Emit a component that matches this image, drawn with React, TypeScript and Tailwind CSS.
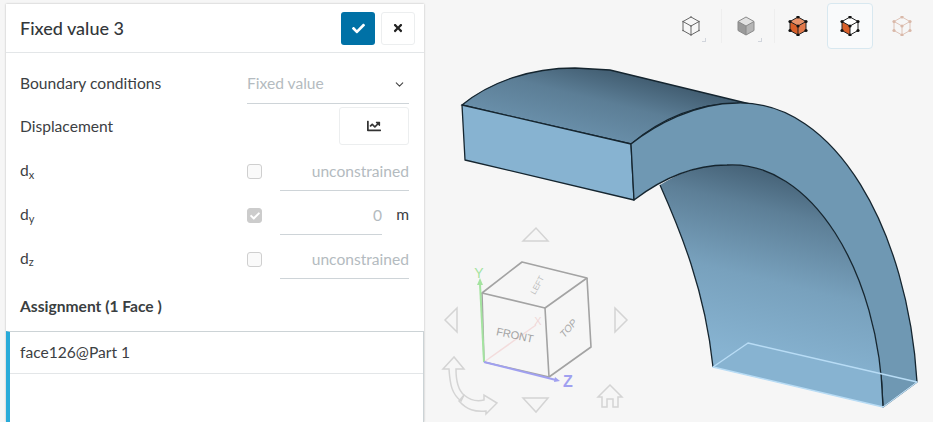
import { ChevronDown } from 'lucide-react';
import { FaCheck, FaChartLine, FaTimes } from 'react-icons/fa';

const outerArc = 'C655,125 695,103 737,103 C835,100 908,230 917,382';
const innerArcBack = 'C880,270 810,160 727,165 C690,165 660,180 634,200';

const Model = () => (
    <svg viewBox="424 0 509 422" className="absolute inset-0 w-full h-full">
        <defs>
            <linearGradient id="topFace" x1="0.1" y1="0.9" x2="0.85" y2="0.1">
                <stop offset="0" stopColor="#7199b5" />
                <stop offset="0.55" stopColor="#5c7e96" />
                <stop offset="1" stopColor="#344c5e" />
            </linearGradient>
            <linearGradient id="underFace" x1="0.6" y1="0" x2="0.42" y2="0.8">
                <stop offset="0" stopColor="#3f5a6e" />
                <stop offset="0.25" stopColor="#5d7f97" />
                <stop offset="0.6" stopColor="#78a1bd" />
                <stop offset="1" stopColor="#87b3d1" />
            </linearGradient>
        </defs>
        <path d="M462,105 C490,82 530,68 575,68 L610,70 L750,104 C700,100 660,120 631,144 Z" fill="url(#topFace)" stroke="#15252f" strokeWidth="1.3" />
        <path d="M660,185 C680,230 705,290 713,367 L883,407 C880,270 810,160 727,165 C700,165 680,172 660,185 Z" fill="url(#underFace)" />
        <path d="M631,144 L634,200 L465,160 L462,105 Z" fill="#87b3d1" stroke="#15252f" strokeWidth="1.3" strokeLinejoin="round" />
        <path d={`M631,144 ${outerArc} L883,407 ${innerArcBack} Z`} fill="#6f98b3" stroke="#15252f" strokeWidth="1.3" strokeLinejoin="round" />
        <path d="M660,185 C680,230 705,290 713,367" fill="none" stroke="#15252f" strokeWidth="1.3" />
        <path d="M713,367 L883,407 L881,373 L748,343 Z" fill="#87b3d1" />
        <path d="M881,373 L883,407" stroke="#15252f" strokeWidth="1.3" />
        <path d="M713,367 L883,407 L917,382 L748,343 Z" fill="none" stroke="#b8dcf5" strokeWidth="1.5" strokeLinejoin="round" />
    </svg>
);

const Gizmo = () => (
    <svg viewBox="424 0 509 422" className="absolute inset-0 w-full h-full" fontFamily="'Liberation Sans', sans-serif">
        <g fill="none" stroke="#d4d4d4" strokeWidth="1.5">
            <path d="M523,241 L536,228 L548,241 Z" />
            <path d="M457,308 L445,320 L457,332 Z" />
            <path d="M615,308 L627,320 L615,332 Z" />
            <path d="M523,398 L536,412 L548,398 Z" />
            <path d="M610,385 L598,397 L602,397 L602,407 L607,407 L607,399 L613,399 L613,407 L618,407 L618,397 L622,397 Z" />
            <path d="M454,357 L443,369 L449,369 C450,385 452,394 461,401 L464,395 C458,390 456,380 456,369 L464,369 Z" />
            <path d="M459,401 C467,410 475,412 486,411 L486,414 L497,403 L484,395 L484,400 C476,402 470,400 464,395 Z" />
        </g>
        <path d="M484,362 L536,325" stroke="#f3dcdc" strokeWidth="1.5" />
        <text x="538" y="325" fontSize="11" fill="#f0d6d6" textAnchor="middle">X</text>
        <g fill="none" stroke="#a3a3a3" strokeWidth="1.6" strokeLinejoin="round">
            <path d="M482,293 L522,262 L587,278 L545,308 Z" />
            <path d="M545,308 L549,377 L591,347 L587,278" />
            <path d="M482,293 L484,362" />
            <path d="M549,377 L484,362" />
        </g>
        <text x="515" y="339" fontSize="11" fill="#a3a3a3" textAnchor="middle" transform="rotate(12 515 335)">FRONT</text>
        <text x="537" y="288" fontSize="8" fill="#bcbcbc" textAnchor="middle" transform="rotate(-62 537 285)">LEFT</text>
        <text x="568" y="332" fontSize="10" fontStyle="italic" fill="#a8a8a8" textAnchor="middle" transform="rotate(-48 568 328)">TOP</text>
        <path d="M484,362 L480,284" stroke="#a4e3a0" strokeWidth="2" />
        <path d="M477,285 L480,278 L483,285 Z" fill="#a4e3a0" />
        <text x="479" y="278" fontSize="14" fill="#a4e3a0" textAnchor="middle">Y</text>
        <path d="M484,362 L556,380" stroke="#a0a0f0" strokeWidth="2" />
        <path d="M555,377 L560,381 L554,382 Z" fill="#a0a0f0" />
        <text x="568" y="387" fontSize="16" fontWeight="bold" fill="#a0a0f0" textAnchor="middle">Z</text>
    </svg>
);

const CubeIcon = ({ mode }: { mode: 'wire' | 'grey' | 'solid' | 'edges' | 'points' }) => {
    const dots = [[10, 1], [18, 5.5], [18, 14.5], [10, 19], [2, 14.5], [2, 5.5], [10, 10]];
    const stroke = mode === 'points' ? '#d9b8a8' : mode === 'wire' ? '#666' : mode === 'grey' ? '#8a8a8a' : '#222';
    return (
        <svg viewBox="0 0 20 20" className="w-5 h-5">
            {mode === 'grey' && (
                <>
                    <path d="M10,1 L18,5.5 L10,10 L2,5.5 Z" fill="#e2e2e2" />
                    <path d="M2,5.5 L10,10 L10,19 L2,14.5 Z" fill="#9a9a9a" />
                    <path d="M18,5.5 L10,10 L10,19 L18,14.5 Z" fill="#b5b5b5" />
                </>
            )}
            {mode === 'solid' && (
                <>
                    <path d="M10,1 L18,5.5 L10,10 L2,5.5 Z" fill="#e8926a" />
                    <path d="M2,5.5 L10,10 L10,19 L2,14.5 Z" fill="#d9602a" />
                    <path d="M18,5.5 L10,10 L10,19 L18,14.5 Z" fill="#e2784a" />
                </>
            )}
            {mode === 'edges' && (
                <>
                    <path d="M10,1 L18,5.5 L10,10 L2,5.5 Z" fill="#fff" />
                    <path d="M2,5.5 L10,10 L10,19 L2,14.5 Z" fill="#d9602a" />
                    <path d="M18,5.5 L10,10 L10,19 L18,14.5 Z" fill="#fff" />
                </>
            )}
            <path d="M10,1 L18,5.5 L18,14.5 L10,19 L2,14.5 L2,5.5 Z M2,5.5 L10,10 L18,5.5 M10,10 L10,19" fill="none" stroke={stroke} strokeWidth={mode === 'points' ? 0.8 : 1} />
            {mode !== 'grey' &&
                dots.map(([x, y]) => (
                    <circle key={`${x}-${y}`} cx={x} cy={y} r={mode === 'wire' ? 0.8 : 1.6} fill={mode === 'points' ? '#d9b8a8' : mode === 'wire' ? '#666' : '#111'} />
                ))}
        </svg>
    );
};

const Toolbar = () => (
    <div className="absolute top-[3px] right-[8px] flex items-center">
        <div className="relative w-[46px] h-[46px] flex items-center justify-center mr-[7px]">
            <CubeIcon mode="wire" />
            <span className="absolute right-[8px] bottom-[7px] w-[4px] h-[4px] border-r border-b border-gray-300" />
        </div>
        <div className="w-px h-[34px] bg-[#eeeeee]" />
        <div className="relative w-[46px] h-[46px] flex items-center justify-center ml-[1px] mr-[5px]">
            <CubeIcon mode="grey" />
            <span className="absolute right-[7px] bottom-[7px] w-[4px] h-[4px] border-r border-b border-gray-300" />
        </div>
        <div className="w-px h-[34px] bg-[#eeeeee]" />
        <div className="w-[46px] h-[46px] flex items-center justify-center mr-[6px]">
            <CubeIcon mode="solid" />
        </div>
        <div className="w-[46px] h-[46px] flex items-center justify-center bg-[#f9fafb] border border-[#d8e8f0] rounded-[4px] mr-[6px]">
            <CubeIcon mode="edges" />
        </div>
        <div className="w-[46px] h-[46px] flex items-center justify-center">
            <CubeIcon mode="points" />
        </div>
    </div>
);

const vectorRows = [
    { axis: 'x', value: 'unconstrained', checked: false },
    { axis: 'y', value: '0', checked: true },
    { axis: 'z', value: 'unconstrained', checked: false },
];

const Panel = () => (
    <div className="w-[418px] h-[418px] mt-[4px] ml-[6px] bg-white shadow-[0_0_2px_rgba(0,0,0,0.25)] flex flex-col shrink-0 text-[15.6px] text-[#3c4043]">
        <div className="h-[49px] pl-[14px] pr-[9px] flex items-center justify-between border-b border-[#e3e6e8]">
            <h1 className="text-[18px] font-medium text-[#33373a]">Fixed value 3</h1>
            <div className="flex gap-[6px]">
                <button className="w-[34px] h-[33px] bg-[#0071a6] rounded-[3px] flex items-center justify-center text-white text-[13px]">
                    <FaCheck />
                </button>
                <button className="w-[34px] h-[33px] bg-white border border-[#eceeef] rounded-[3px] flex items-center justify-center text-[#222] text-[12px]">
                    <FaTimes />
                </button>
            </div>
        </div>
        <div className="pl-[14px] pr-[15px]">
            <div className="h-[51px] flex items-end justify-between">
                <span className="pb-[9px]">Boundary conditions</span>
                <div className="w-[162px] h-[40px] flex items-center justify-between border-b border-[#ced4d8] text-[#b4bbc0] pt-[1px]">
                    <span>Fixed value</span>
                    <ChevronDown size={13} className="text-[#444] mr-[3px]" />
                </div>
            </div>
            <div className="h-[43px] flex items-center justify-between">
                <span className="mt-[3px]">Displacement</span>
                <button className="w-[70px] h-[38px] mt-[1px] border border-[#eceeef] rounded-[3px] flex items-center justify-center text-[#333] text-[14px]">
                    <FaChartLine />
                </button>
            </div>
            {vectorRows.map(({ axis, value, checked }) => (
                <div key={axis} className="h-[43.7px] flex items-center justify-between">
                    <span className="mt-[4px]">
                        d<sub className="text-[11px]">{axis}</sub>
                    </span>
                    <div className="w-[162px] flex items-center">
                        <span className={`w-[15px] h-[15px] mt-[6px] rounded-[3px] border flex items-center justify-center text-white text-[10px] ${checked ? 'bg-[#cccccc] border-[#cccccc]' : 'bg-[#fafafa] border-[#cfcfcf]'}`}>
                            {checked && <FaCheck />}
                        </span>
                        <div className="ml-[18px] flex-1 flex items-center">
                            <div className="flex-1 h-[38px] flex items-center justify-end border-b border-[#ced4d8] text-[#b4bbc0] mt-[7px]">
                                {value}
                            </div>
                            {checked && <span className="w-[27px] mt-[5px] text-right text-[#3c4043]">m</span>}
                        </div>
                    </div>
                </div>
            ))}
        </div>
        <div className="pl-[14px] pt-[4px] h-[53px] font-bold text-[#3a3e41] flex items-center">Assignment (1 Face )</div>
        <div className="flex-1 border-t border-r border-[#ccd3d6] border-l-[4px] border-l-[#29abd9]">
            <div className="h-[42px] pl-[10px] flex items-center border-b border-[#e3e6e8]">face126@Part 1</div>
        </div>
    </div>
);

export default function App() {
    return (
        <div className="w-[933px] h-[422px] overflow-hidden bg-[#f6f6f6] flex font-['Lato',sans-serif]">
            <Panel />
            <div className="relative flex-1">
                <Model />
                <Gizmo />
                <Toolbar />
            </div>
        </div>
    );
}
